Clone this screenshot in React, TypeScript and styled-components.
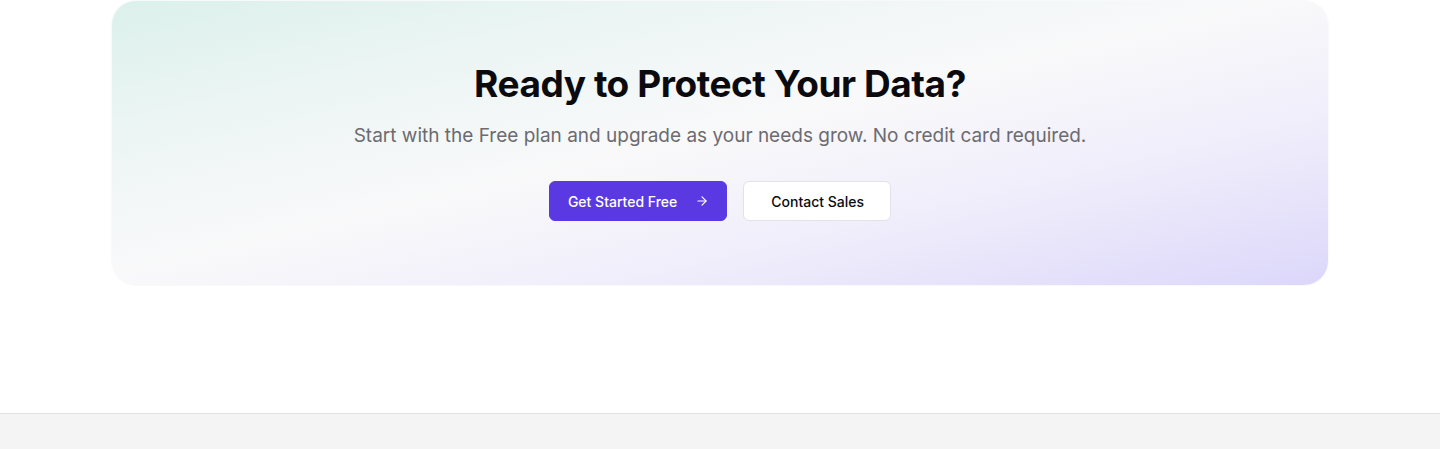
import { createGlobalStyle } from 'styled-components'
import styled from 'styled-components'

const GlobalStyle = createGlobalStyle`
  * {
    box-sizing: border-box;
  }
  body {
    margin: 0;
    background: #ffffff;
    font-family: Inter, 'Noto Sans', sans-serif;
    -webkit-font-smoothing: antialiased;
  }
`

const ArrowIcon = () => (
  <svg width="14" height="14" viewBox="0 0 24 24" fill="none" stroke="currentColor" strokeWidth="2" strokeLinecap="round" strokeLinejoin="round">
    <path d="M5 12h14" />
    <path d="M12 5l7 7-7 7" />
  </svg>
)

const App = () => {
  return (
    <Page>
      <GlobalStyle />
      <CtaSection>
        <CtaCard>
          <Title>Ready to Protect Your Data?</Title>
          <Subtitle>Start with the Free plan and upgrade as your needs grow. No credit card required.</Subtitle>
          <Actions>
            <Button $variant="primary">
              Get Started Free
              <ArrowIcon />
            </Button>
            <Button $variant="secondary">Contact Sales</Button>
          </Actions>
        </CtaCard>
      </CtaSection>
      <Footer />
    </Page>
  )
}

const Page = styled.div`
  display: flex;
  flex-direction: column;
  min-height: 100vh;
`

const CtaSection = styled.section`
  padding: 1px 112px 128px;
`

const CtaCard = styled.div`
  height: 284px;
  border-radius: 24px;
  background: linear-gradient(to bottom right, #dbf0ec 0%, #ebf5f3 22%, #f9f9fa 48%, #f0eefb 70%, #dcd7fa 100%);
  box-shadow: 0 0 0 1px rgba(235, 237, 243, 0.35);
  display: flex;
  flex-direction: column;
  align-items: center;
  padding-top: 60px;
`

const Title = styled.h2`
  margin: 0;
  font-size: 37px;
  line-height: 46px;
  font-weight: 700;
  letter-spacing: -0.45px;
  color: #0b0b0f;
`

const Subtitle = styled.p`
  margin: 15px 0 0;
  font-size: 19px;
  line-height: 28px;
  color: #6b6b70;
`

const Actions = styled.div`
  display: flex;
  gap: 16px;
  margin-top: 31px;
`

const Button = styled.button<{ $variant: 'primary' | 'secondary' }>`
  display: inline-flex;
  align-items: center;
  justify-content: center;
  gap: 18px;
  height: 40px;
  padding: ${(p) => (p.$variant === 'primary' ? '0 17px 0 18px' : '0 26px 0 27px')};
  border-radius: 6px;
  font-family: Inter, 'Noto Sans', sans-serif;
  font-size: 14px;
  font-weight: 500;
  cursor: pointer;
  background: ${(p) => (p.$variant === 'primary' ? '#5b39e2' : '#ffffff')};
  color: ${(p) => (p.$variant === 'primary' ? '#ffffff' : '#0b0b0f')};
  border: 1px solid ${(p) => (p.$variant === 'primary' ? '#5b39e2' : '#e2e2e8')};
`

const Footer = styled.footer`
  flex: 1;
  min-height: 36px;
  background: #f4f4f4;
  border-top: 1px solid #e2e2e2;
`

export default App
